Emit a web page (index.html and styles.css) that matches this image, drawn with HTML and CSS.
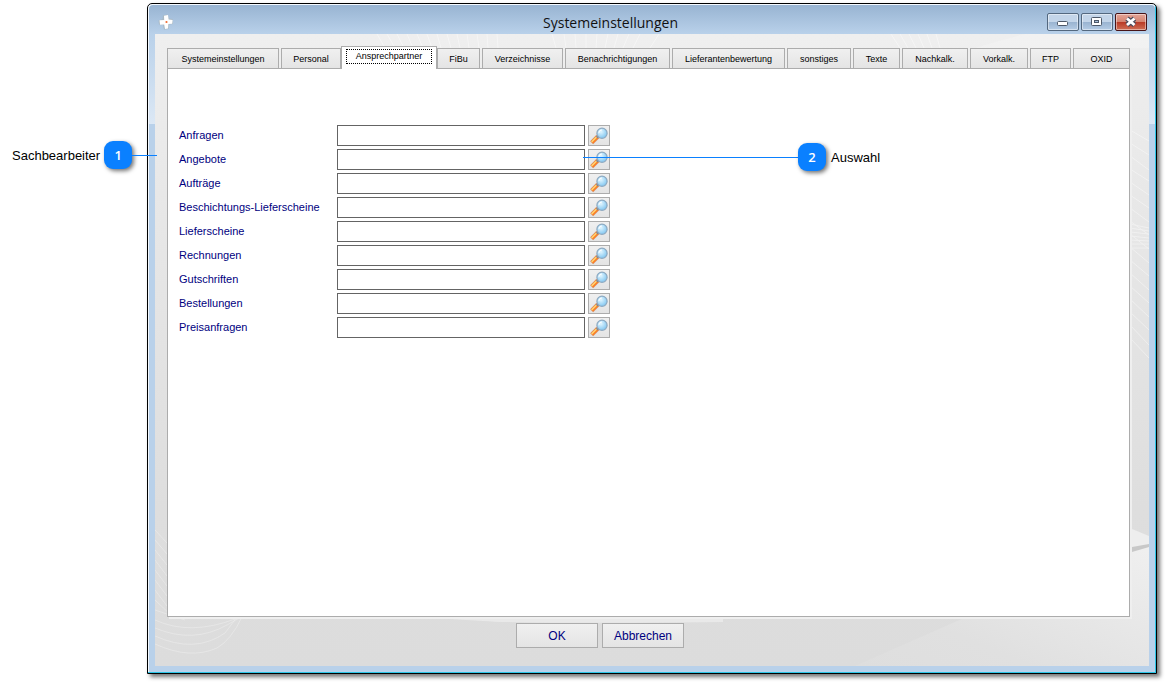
FILE: index.html
```html
<!DOCTYPE html>
<html lang="de">
<head>
<meta charset="utf-8">
<title>Systemeinstellungen</title>
<link rel="stylesheet" href="styles.css">
</head>
<body>
<svg class="defs" aria-hidden="true">
  <defs>
    <radialGradient id="lens" cx="40%" cy="35%" r="70%">
      <stop offset="0" stop-color="#e2f6ff"/><stop offset="1" stop-color="#7cc4f0"/>
    </radialGradient>
    <symbol id="search" viewBox="0 0 20 19">
      <path d="M2.600 16.800 9 10.400" stroke="#c9a08c" stroke-width="4.400"/>
      <path d="M2.900 16.500 8.600 10.800" stroke="#ff7f24" stroke-width="3.400"/>
      <path d="M2.600 15.900 7.800 10.700" stroke="#ffd977" stroke-width="1.400"/>
      <path d="M7.800 11.600 10 9.400" stroke="#85858f" stroke-width="2.400"/>
      <circle cx="13" cy="7.200" r="5.100" fill="url(#lens)" stroke="#8ea9c0" stroke-width="1.200"/>
      <path d="M9.800 7.200a3.300 3.300 0 0 1 3.200-3.300" stroke="#fff" fill="none"/>
    </symbol>
  </defs>
</svg>
<main class="page">
  <section class="window">
    <header class="titlebar">
      <svg class="app-icon" viewBox="0 0 16 16" aria-hidden="true">
        <path d="M5 1.500 9.500.5l1.500 4 3.500.5.500 5-4 .500-.5 4.500-4.500.5-1-4.500-4-.5L.5 6.500 4.500 5z" fill="#a9b9c4"/>
        <path d="M6 1.800 10 1l.6 4.400 4 .600-.4 3.800-3.800.3-.4 4.400-3 .5-.8-4.500-4.200.2L1.500 6.300 6.200 6z" fill="#fff"/>
        <circle cx="8.500" cy="8" r="1.100" fill="#f06a30"/>
      </svg>
      <h1 class="title">Systemeinstellungen</h1>
      <div class="controls">
        <button class="control" type="button" aria-label="Minimieren">
          <svg viewBox="0 0 30 16"><rect x="9.500" y="7.500" width="10" height="4" rx="1" fill="#fff" stroke="#4d5868"/></svg>
        </button>
        <button class="control" type="button" aria-label="Maximieren">
          <svg viewBox="0 0 30 16"><rect x="9.500" y="3.500" width="10" height="8" rx="1" fill="#fff" stroke="#4d5868"/><rect x="12.500" y="6.500" width="4" height="2" fill="#a8bfd9" stroke="#4d5868"/></svg>
        </button>
        <button class="control close" type="button" aria-label="Schließen">
          <svg viewBox="0 0 30 16"><path d="M11 4.500l7.500 6.500m0-6.500L11 11" stroke="#484b5c" stroke-width="5"/><path d="M11 4.500l7.500 6.500m0-6.500L11 11" stroke="#fff" stroke-width="2.800"/></svg>
        </button>
      </div>
    </header>
    <div class="client">
      <svg class="pattern" viewBox="0 0 994 632" preserveAspectRatio="none" aria-hidden="true">
        <defs>
          <linearGradient id="sweep" x1="0" y1="1" x2="1" y2="0"><stop offset="0" stop-color="#dedede"/><stop offset=".3" stop-color="#e0e0e0"/><stop offset="1" stop-color="#f0f0f0"/></linearGradient>
        </defs>
        <path d="M700 632 977 510l17-3v125z" fill="url(#sweep)"/>
        <path d="M820 14Q850 5 870 0h124v14z" fill="#f4f4f4" opacity=".6"/>
        <path d="M977 495l17 7v8l-17 3z" fill="#eee"/>
        <path d="M977 513l17-3v3l-17 5z" fill="#c8c8c8"/>
        <g fill="none" stroke="#fff" opacity=".4">
          <path d="M222 0l8 14m2-14 8 14m2-14 7 14m3-14 6 14m4-14 6 14m4-14 5 14m5-14 4 14m6-14 4 14m6-14 3 14m7-14 2 14m8-14 2 14m8-14 1 14m9-14 1 14"/>
          <path d="M401 14l-4-14m14 14-2-14m12 14-1-14m11 14V0m10 14 1-14m8 14 3-14m6 14 4-14m5 14 6-14m4 14 7-14m10 14 9-14"/>
          <path d="M736 0l9 14m0-14 8 14m1-14 7 14m2-14 6 14m3-14 5 14m4-14 4 14"/>
          <path d="M975 96l19 11m-19 2 19 12m-19 1 19 14m-19-1 19 12m-19 1 19 13m-19 0 19 13m-19 0 19 14m-19-1 19 14m-19-1 19 15m-19-2 19 16m-19-3 19 16m-19-3 19 17m-19-4 19 17m-19-4 19 18m-19-5 19 18m-19-5 19 20m-19-7 19 20"/>
          <path d="M975 190l19 4m-19 0 19 3m-19 1 19 2m-19 2 19 2m-19 2 19 1m-19 3h19m-19 4h19"/>
        </g>
        <g fill="none" stroke="#f2f2f2" opacity=".45">
          <path d="M0 610q35 16 62 4 14-8 25-31M0 602q40 18 70-3l12-16M0 594q38 16 72-3l14-8M0 586q35 16 80-1M0 576l30 10M0 566l18 17M0 556l12 16M0 546l12 16M0 536l12 16M0 526l12 16M0 516l12 15M0 506l12 14M0 496l12 13"/>
        </g>
        <path d="M278 584h290v4q-200 2-240-1z" fill="#f2f2f2" opacity=".6"/>
      </svg>
      <nav class="tabs" role="tablist">
        <button class="tab" type="button" role="tab">Systemeinstellungen</button>
        <button class="tab joined" type="button" role="tab">Personal</button>
        <button class="tab joined active" type="button" role="tab" aria-selected="true"><span class="focus">Ansprechpartner</span></button>
        <button class="tab" type="button" role="tab">FiBu</button>
        <button class="tab" type="button" role="tab">Verzeichnisse</button>
        <button class="tab" type="button" role="tab">Benachrichtigungen</button>
        <button class="tab" type="button" role="tab">Lieferantenbewertung</button>
        <button class="tab" type="button" role="tab">sonstiges</button>
        <button class="tab" type="button" role="tab">Texte</button>
        <button class="tab" type="button" role="tab">Nachkalk.</button>
        <button class="tab" type="button" role="tab">Vorkalk.</button>
        <button class="tab" type="button" role="tab">FTP</button>
        <button class="tab joined" type="button" role="tab">OXID</button>
      </nav>
      <div class="panel" role="tabpanel">
        <div class="row"><label for="f1">Anfragen</label><input id="f1" type="text"><button class="lookup" type="button" aria-label="Anfragen auswählen"><svg><use href="#search"/></svg></button></div>
        <div class="row"><label for="f2">Angebote</label><input id="f2" type="text"><button class="lookup" type="button" aria-label="Angebote auswählen"><svg><use href="#search"/></svg></button></div>
        <div class="row"><label for="f3">Aufträge</label><input id="f3" type="text"><button class="lookup" type="button" aria-label="Aufträge auswählen"><svg><use href="#search"/></svg></button></div>
        <div class="row"><label for="f4">Beschichtungs-Lieferscheine</label><input id="f4" type="text"><button class="lookup" type="button" aria-label="Beschichtungs-Lieferscheine auswählen"><svg><use href="#search"/></svg></button></div>
        <div class="row"><label for="f5">Lieferscheine</label><input id="f5" type="text"><button class="lookup" type="button" aria-label="Lieferscheine auswählen"><svg><use href="#search"/></svg></button></div>
        <div class="row"><label for="f6">Rechnungen</label><input id="f6" type="text"><button class="lookup" type="button" aria-label="Rechnungen auswählen"><svg><use href="#search"/></svg></button></div>
        <div class="row"><label for="f7">Gutschriften</label><input id="f7" type="text"><button class="lookup" type="button" aria-label="Gutschriften auswählen"><svg><use href="#search"/></svg></button></div>
        <div class="row"><label for="f8">Bestellungen</label><input id="f8" type="text"><button class="lookup" type="button" aria-label="Bestellungen auswählen"><svg><use href="#search"/></svg></button></div>
        <div class="row"><label for="f9">Preisanfragen</label><input id="f9" type="text"><button class="lookup" type="button" aria-label="Preisanfragen auswählen"><svg><use href="#search"/></svg></button></div>
      </div>
      <footer class="actions">
        <button class="action" type="button">OK</button>
        <button class="action" type="button">Abbrechen</button>
      </footer>
    </div>
  </section>
  <div class="callout callout-left"><span class="note">Sachbearbeiter</span><span class="badge">1</span><span class="line"></span></div>
  <div class="callout callout-right"><span class="line"></span><span class="badge">2</span><span class="note">Auswahl</span></div>
</main>
</body>
</html>
```
FILE: styles.css
```css
* { box-sizing: border-box; }
body { margin: 0; background: #fff; font-family: "Liberation Sans", Arial, sans-serif; }
button { margin: 0; padding: 0; font-family: inherit; }
.defs { position: absolute; width: 0; height: 0; }
.page { position: relative; display: flex; min-height: 100vh; padding: 3px 8px 8px 147px; }
.window {
  flex: 1; display: flex; flex-direction: column; min-width: 0;
  padding: 1px;
  border: 1px solid #000; border-radius: 5px 5px 0 0;
  background: #f4f9ff;
  box-shadow: inset -1px -1px #2bc6e8, 3px 3px 4px rgba(0, 0, 0, .55);
}
.titlebar {
  display: flex; align-items: center; height: 29px; padding: 0 8px 0 9px;
  border-radius: 4px 4px 0 0;
  background: linear-gradient(#98b4d2, #b9d1ea);
}
.app-icon { width: 16px; height: 16px; margin-top: 4px; }
.title {
  flex: 1; margin: 0; padding-top: 7px; text-align: center;
  font: 400 14px/22px "Open Sans", "Noto Sans", sans-serif; color: #111;
}
.controls { display: flex; gap: 2px; padding-top: 5px; }
.control {
  width: 32px; height: 18px; border: 1px solid #53687f; border-radius: 2px;
  background: linear-gradient(#c3d5e9 0 48%, #9ab4d1 52%, #b5cce5);
  box-shadow: inset 0 0 0 1px rgba(255, 255, 255, .45);
}
.control svg { display: block; width: 30px; height: 16px; }
.close { border-color: #471418; background: linear-gradient(#e4a598, #d58471 48%, #b93a26 52%, #cf6f55); }
.client {
  position: relative; flex: 1; display: flex; flex-direction: column;
  padding: 12px 19px 18px 12px;
  border: 6px solid #b9d1ea; border-top: 0;
  border-image: linear-gradient(#b9d1ea, #dce8f5 90px, #b9d1ea 90px) 0 6 6 6;
  background: linear-gradient(#efefef, #e8e8e8 25%, #dedede 75%, #dcdcdc);
}
.pattern { position: absolute; inset: 0; width: 100%; height: 100%; }
.tabs {
  position: relative; z-index: 1; display: grid; align-items: end; height: 23px; margin-bottom: -1px;
  grid-template-columns: 114fr 60fr 96fr 45fr 83fr 107fr 115fr 66fr 49fr 68fr 60fr 43fr 57fr;
}
.tab {
  height: 21px; margin-right: 2px; padding-top: 1px;
  border: 1px solid #acacac; background: linear-gradient(#f0f0f0, #e4e4e4);
  font-size: 9px; line-height: 18px; color: #000; white-space: nowrap;
}
.tab.joined { margin-right: 0; }
.tab.active { height: 23px; border-bottom: 0; background: #fff; }
.focus { display: block; margin: 0 4px 4px; border: 1px dotted #000; line-height: 13px; }
.panel {
  position: relative; flex: 1; display: flex; flex-direction: column; gap: 3px;
  padding: 56px 11px 20px; border: 1px solid #acacac; background: #fff;
  box-shadow: 2px 2px #efefef;
}
.row { display: grid; grid-template-columns: 155px 248px 22px; column-gap: 3px; height: 21px; align-items: center; }
.row label { font-size: 11px; line-height: 21px; color: #000080; white-space: nowrap; }
.row input { width: 100%; height: 21px; padding: 0 4px; border: 1px solid #646464; background: #fff; font: 11px "Liberation Sans", Arial, sans-serif; }
.lookup { width: 22px; height: 21px; border: 1px solid #acacac; background: linear-gradient(#f0f0f0, #e4e4e4); }
.lookup svg { display: block; width: 20px; height: 19px; }
.actions { position: relative; display: flex; justify-content: center; gap: 4px; padding: 6px 97px 0 0; }
.action {
  width: 82px; height: 25px; border: 1px solid #acacac; background: linear-gradient(#f0f0f0, #e4e4e4);
  font-size: 12px; color: #000080;
}
.callout { position: absolute; display: flex; align-items: center; height: 28px; font-size: 13px; color: #000; }
.callout-left { left: 12px; top: 141px; }
.callout-right { left: 583px; top: 143px; }
.badge {
  width: 28px; height: 28px; border-radius: 9px; background: #0a80ff; color: #fff; text-align: center;
  font: 600 13px/28px "Open Sans", "Noto Sans", sans-serif; box-shadow: 2px 2px 4px rgba(0, 0, 0, .55);
}
.line { height: 1px; background: #0a80ff; }
.callout-left .line { width: 25px; }
.callout-right .line { width: 215px; }
.callout-left .note { margin-right: 4px; }
.callout-right .note { margin-left: 5px; }
```
